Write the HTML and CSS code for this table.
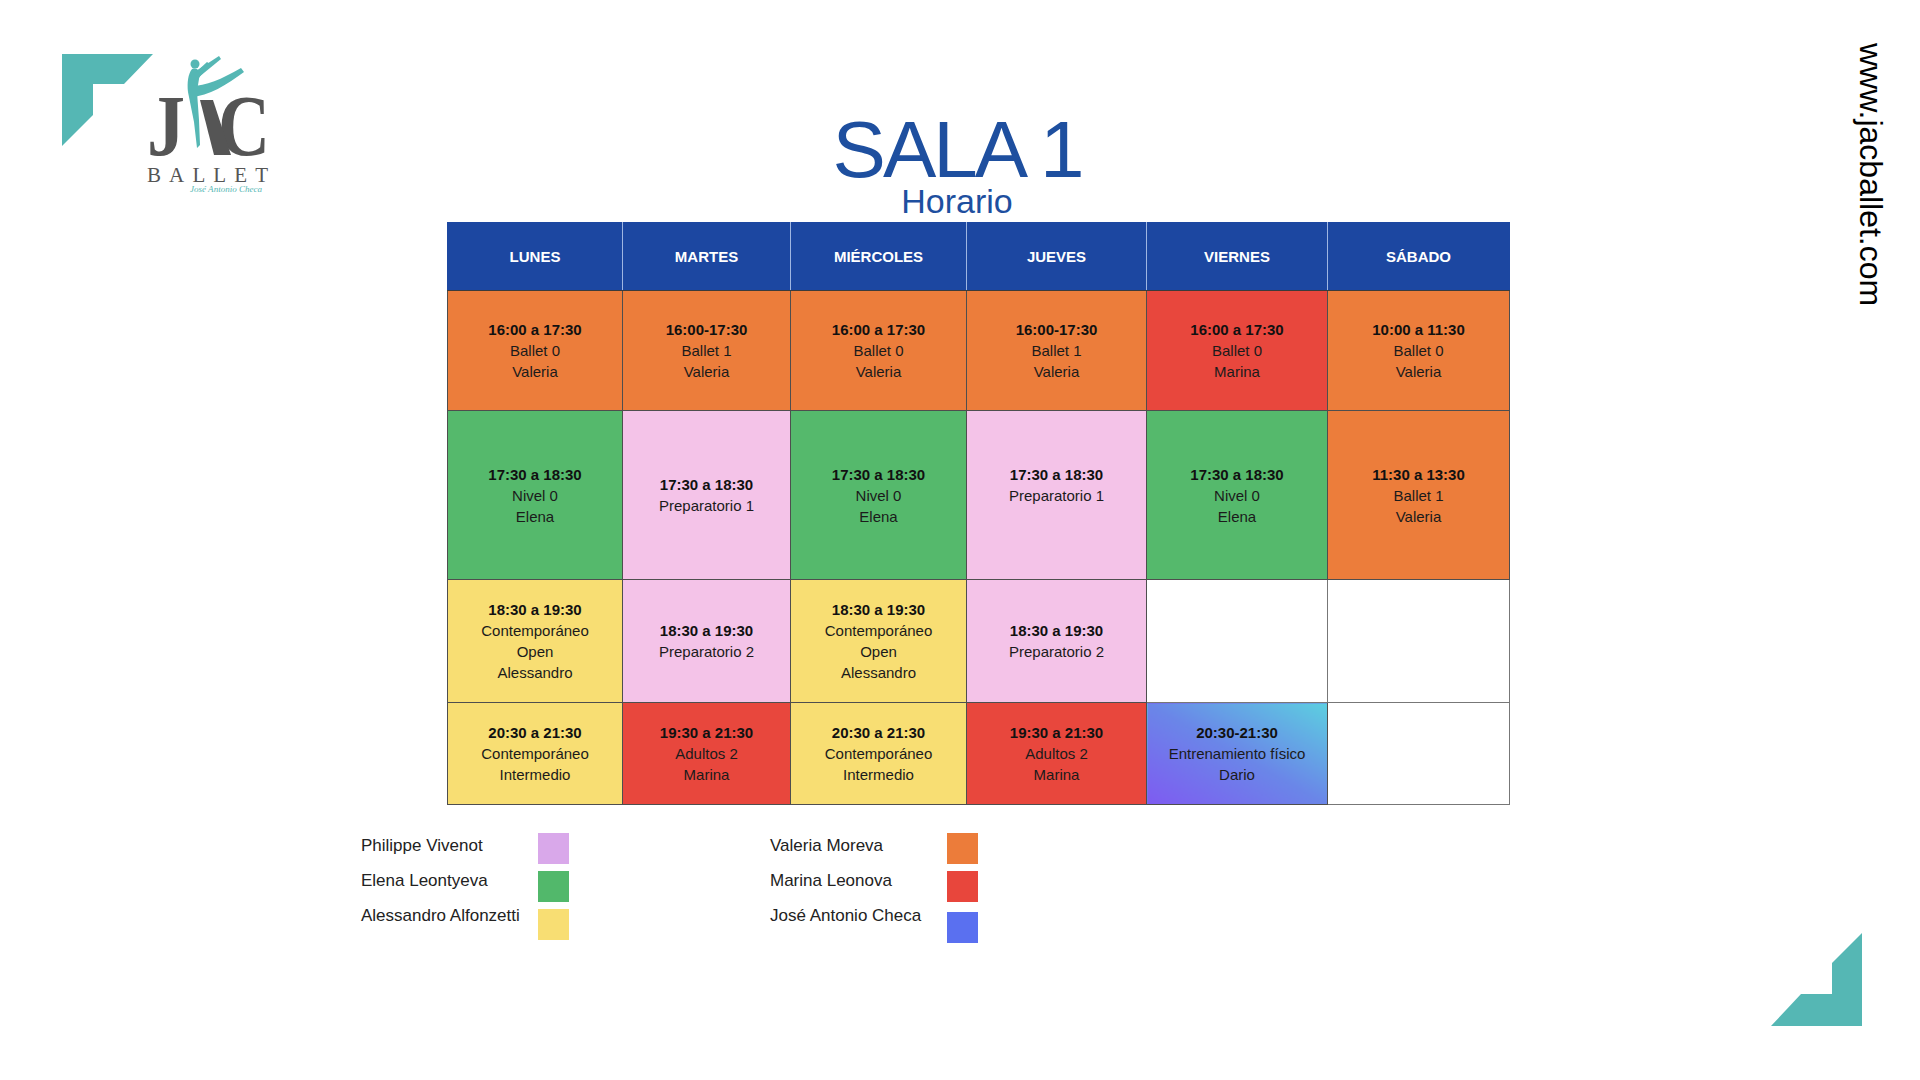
FILE: index.html
```html
<!DOCTYPE html>
<html lang="es">
<head>
<meta charset="utf-8">
<title>SALA 1 - Horario</title>
<link rel="stylesheet" href="styles.css">
</head>
<body>
<div class="page">
  <aside class="side-left">
    <svg class="logo" width="230" height="150" viewBox="0 0 230 150" xmlns="http://www.w3.org/2000/svg">
      <polygon points="12,4 103,4 74,34 43,34 43,65 12,96" fill="#55b7b4"/>
      <text x="97" y="105" class="logo-letter" textLength="38" lengthAdjust="spacingAndGlyphs">J</text>
      <text x="168" y="105" class="logo-letter" textLength="52" lengthAdjust="spacingAndGlyphs">C</text>
      <polygon points="150,50 163,50 181,105 164,105" fill="#555"/>
      <g fill="#55b7b4">
        <circle cx="145" cy="14" r="4.5"/>
        <path d="M142,19 C148,17 151,22 149,29 L147,41 L138,42 C137,33 138,24 142,19 Z"/>
        <path d="M146,21 L169,6 L171,9 L149,27 Z"/>
        <path d="M144,24 L157,12 L160,14 L148,29 Z"/>
        <path d="M138,36 C154,37 170,30 191,18 L194,22 C176,35 160,46 140,47 Z"/>
        <path d="M138,42 L147,42 L149,70 L150,95 L147,98 L144,72 Z"/>
      </g>
      <text x="97" y="132" class="logo-word" textLength="121" lengthAdjust="spacing">BALLET</text>
      <text x="140" y="142" class="logo-sign" textLength="72" lengthAdjust="spacingAndGlyphs">José Antonio Checa</text>
    </svg>
  </aside>

  <main class="center">
    <header class="heading">
      <h1 class="title">SALA 1</h1>
      <p class="subtitle">Horario</p>
    </header>

    <table class="schedule">
      <colgroup>
        <col class="c1"><col class="c2"><col class="c3"><col class="c4"><col class="c5"><col class="c6">
      </colgroup>
      <thead>
        <tr class="r-head">
          <th>LUNES</th><th>MARTES</th><th>MIÉRCOLES</th><th>JUEVES</th><th>VIERNES</th><th>SÁBADO</th>
        </tr>
      </thead>
      <tbody>
        <tr class="r1">
          <td class="orange"><b>16:00 a 17:30</b><br>Ballet 0<br>Valeria</td>
          <td class="orange"><b>16:00-17:30</b><br>Ballet 1<br>Valeria</td>
          <td class="orange"><b>16:00 a 17:30</b><br>Ballet 0<br>Valeria</td>
          <td class="orange"><b>16:00-17:30</b><br>Ballet 1<br>Valeria</td>
          <td class="red"><b>16:00 a 17:30</b><br>Ballet 0<br>Marina</td>
          <td class="orange"><b>10:00 a 11:30</b><br>Ballet 0<br>Valeria</td>
        </tr>
        <tr class="r2">
          <td class="green"><b>17:30 a 18:30</b><br>Nivel 0<br>Elena</td>
          <td class="pink"><b>17:30 a 18:30</b><br>Preparatorio 1</td>
          <td class="green"><b>17:30 a 18:30</b><br>Nivel 0<br>Elena</td>
          <td class="pink raised"><b>17:30 a 18:30</b><br>Preparatorio 1</td>
          <td class="green"><b>17:30 a 18:30</b><br>Nivel 0<br>Elena</td>
          <td class="orange"><b>11:30 a 13:30</b><br>Ballet 1<br>Valeria</td>
        </tr>
        <tr class="r3">
          <td class="yellow"><b>18:30 a 19:30</b><br>Contemporáneo<br>Open<br>Alessandro</td>
          <td class="pink"><b>18:30 a 19:30</b><br>Preparatorio 2</td>
          <td class="yellow"><b>18:30 a 19:30</b><br>Contemporáneo<br>Open<br>Alessandro</td>
          <td class="pink"><b>18:30 a 19:30</b><br>Preparatorio 2</td>
          <td class="empty"></td>
          <td class="empty"></td>
        </tr>
        <tr class="r4">
          <td class="yellow"><b>20:30 a 21:30</b><br>Contemporáneo<br>Intermedio</td>
          <td class="red"><b>19:30 a 21:30</b><br>Adultos 2<br>Marina</td>
          <td class="yellow"><b>20:30 a 21:30</b><br>Contemporáneo<br>Intermedio</td>
          <td class="red"><b>19:30 a 21:30</b><br>Adultos 2<br>Marina</td>
          <td class="gradient"><b>20:30-21:30</b><br>Entrenamiento físico<br>Dario</td>
          <td class="empty"></td>
        </tr>
      </tbody>
    </table>

    <section class="legend">
      <div class="legend-group">
        <ul class="names">
          <li>Philippe Vivenot</li>
          <li>Elena Leontyeva</li>
          <li>Alessandro Alfonzetti</li>
        </ul>
        <div class="swatches">
          <span class="swatch sw-lilac"></span>
          <span class="swatch sw-green"></span>
          <span class="swatch sw-yellow"></span>
        </div>
      </div>
      <div class="legend-group">
        <ul class="names">
          <li>Valeria Moreva</li>
          <li>Marina Leonova</li>
          <li>José Antonio Checa</li>
        </ul>
        <div class="swatches">
          <span class="swatch sw-orange"></span>
          <span class="swatch sw-red"></span>
          <span class="swatch sw-blue low"></span>
        </div>
      </div>
    </section>
  </main>

  <aside class="side-right">
    <div class="url">www.jacballet.com</div>
    <svg class="corner" width="91" height="93" viewBox="0 0 91 93" xmlns="http://www.w3.org/2000/svg">
      <polygon points="91,0 91,93 0,93 30,61 61,61 61,30" fill="#55b7b4"/>
    </svg>
  </aside>
</div>
</body>
</html>
```

FILE: styles.css
```css
* { box-sizing: border-box; }

html, body {
  margin: 0;
  padding: 0;
  background: #ffffff;
}

body {
  font-family: "Liberation Sans", Arial, sans-serif;
  color: #1b1b1b;
}

.page {
  width: 1920px;
  height: 1080px;
  display: grid;
  grid-template-columns: 360px 1149px 411px;
  overflow: hidden;
}

/* ---------- left: logo ---------- */
.side-left {
  padding: 50px 0 0 50px;
}

.logo {
  display: block;
  overflow: visible;
}

.logo-letter {
  font-family: "Liberation Serif", "Times New Roman", serif;
  font-size: 86px;
  font-weight: 700;
  fill: #555555;
}

.logo-word {
  font-family: "Liberation Serif", "Times New Roman", serif;
  font-size: 21px;
  fill: #555555;
}

.logo-sign {
  font-family: "Liberation Serif", "Times New Roman", serif;
  font-style: italic;
  font-size: 8px;
  fill: #55b7b4;
}

/* ---------- center ---------- */
.center {
  padding-top: 113px;
  display: flex;
  flex-direction: column;
}

.heading {
  margin: 0 42px 0 87px;
  text-align: center;
  color: #1e4f9f;
}

.title {
  margin: 0;
  font-size: 80px;
  line-height: 74px;
  font-weight: 400;
  letter-spacing: -3px;
}

.subtitle {
  margin: 0;
  font-size: 34px;
  line-height: 28px;
}

.schedule {
  margin: 7px 0 0 87px;
  width: 1062px;
  table-layout: fixed;
  border-collapse: collapse;
  font-size: 15px;
  line-height: 21px;
  text-align: center;
}

.c1 { width: 175px; }
.c2 { width: 168px; }
.c3 { width: 176px; }
.c4 { width: 180px; }
.c5 { width: 181px; }
.c6 { width: 182px; }

.schedule th {
  background: #1c47a1;
  color: #ffffff;
  font-weight: 700;
  font-size: 15px;
  padding: 0;
  border-left: 1px solid #9fb6e2;
  border-right: 1px solid #9fb6e2;
  border-top: 1px solid #1c47a1;
  border-bottom: 1px solid #3b3b3b;
}

.schedule th:first-child { border-left-color: #1c47a1; }
.schedule th:last-child { border-right-color: #1c47a1; }

.schedule td {
  padding: 0;
  vertical-align: middle;
  border: 1px solid #4e4e4e;
  color: #1b1b1b;
}

.schedule td b { color: #111111; }

.r-head { height: 68px; }
.r1 { height: 120px; }
.r2 { height: 169px; }
.r3 { height: 123px; }
.r4 { height: 102px; }

.raised { padding-bottom: 21px !important; }

.orange { background: #ec7d3b; }
.red { background: #e8473d; }
.green { background: #55b96c; }
.pink { background: #f4c3e8; }
.yellow { background: #f8de73; }
.empty { background: #ffffff; border-color: #777777 !important; }
.gradient {
  background: linear-gradient(to top right, #7e5bf1 0%, #6a86e8 50%, #5ccfe0 100%);
}

/* ---------- legend ---------- */
.legend {
  margin: 26px 0 0 1px;
  display: flex;
  gap: 201px;
}

.legend-group {
  display: flex;
}

.names {
  list-style: none;
  margin: -3px 0 0;
  padding: 0;
  width: 177px;
  font-size: 17px;
  line-height: 35px;
  color: #222222;
}

.swatches {
  display: flex;
  flex-direction: column;
  gap: 7px;
  padding-top: 2px;
}

.swatch {
  display: block;
  width: 31px;
  height: 31px;
}

.swatch.low { margin-top: 3px; }

.sw-lilac { background: #d9a8ea; }
.sw-green { background: #52b86b; }
.sw-yellow { background: #f8de73; }
.sw-orange { background: #ec7c3a; }
.sw-red { background: #e8463c; }
.sw-blue { background: #5a70f0; }

/* ---------- right ---------- */
.side-right {
  display: flex;
  flex-direction: column;
  align-items: flex-end;
}

.url {
  writing-mode: vertical-rl;
  font-size: 32px;
  line-height: 32px;
  color: #000000;
  margin: 43px 33px 0 0;
}

.corner {
  display: block;
  margin: auto 58px 54px 0;
}
```
